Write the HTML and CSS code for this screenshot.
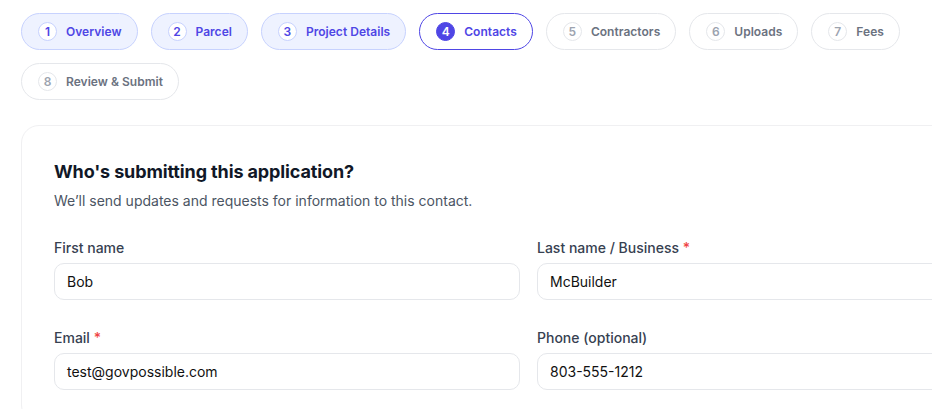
FILE: index.html
```html
<!DOCTYPE html>
<html lang="en">
<head>
<meta charset="utf-8">
<title>Contacts</title>
<link rel="stylesheet" href="styles.css">
</head>
<body>
<div class="page">
  <nav class="steps">
    <div class="step done"><span class="num">1</span><span class="label">Overview</span></div>
    <div class="step done"><span class="num">2</span><span class="label">Parcel</span></div>
    <div class="step done"><span class="num">3</span><span class="label">Project Details</span></div>
    <div class="step active"><span class="num">4</span><span class="label">Contacts</span></div>
    <div class="step"><span class="num">5</span><span class="label">Contractors</span></div>
    <div class="step"><span class="num">6</span><span class="label">Uploads</span></div>
    <div class="step"><span class="num">7</span><span class="label">Fees</span></div>
    <div class="step"><span class="num">8</span><span class="label">Review &amp; Submit</span></div>
  </nav>

  <section class="card">
    <h2 class="title">Who's submitting this application?</h2>
    <p class="subtitle">We’ll send updates and requests for information to this contact.</p>
    <div class="form">
      <div class="field">
        <label class="flabel">First name</label>
        <div class="input">Bob</div>
      </div>
      <div class="field">
        <label class="flabel">Last name / Business <span class="req">*</span></label>
        <div class="input">McBuilder</div>
      </div>
      <div class="field">
        <label class="flabel">Email <span class="req">*</span></label>
        <div class="input">test@govpossible.com</div>
      </div>
      <div class="field">
        <label class="flabel">Phone (optional)</label>
        <div class="input">803-555-1212</div>
      </div>
    </div>
  </section>
</div>
</body>
</html>
```

FILE: styles.css
```css
html, body {
  margin: 0;
  padding: 0;
  overflow: hidden;
  background: #ffffff;
}
body {
  font-family: Inter, "Noto Sans", sans-serif;
  color: #111827;
}
.page {
  padding: 13px 0 0 21px;
}
.steps {
  display: flex;
  flex-wrap: wrap;
  gap: 13px;
  width: 900px;
}
.step {
  display: flex;
  align-items: center;
  gap: 9px;
  height: 37px;
  box-sizing: border-box;
  padding: 0 15px 0 16px;
  border: 1px solid #e5e7eb;
  border-radius: 999px;
  background: #ffffff;
  color: #6b7280;
  font-size: 12px;
  font-weight: 600;
  letter-spacing: 0.03px;
}
.num {
  display: flex;
  align-items: center;
  justify-content: center;
  width: 19px;
  height: 19px;
  box-sizing: border-box;
  border-radius: 50%;
  border: 1px solid #e5e7eb;
  background: #ffffff;
  color: #9ca3af;
  font-size: 12px;
  font-weight: 600;
}
.step.done {
  background: #eef2ff;
  border-color: #c7d2fe;
  color: #4f46e5;
}
.step.done .num {
  border-color: #c7d2fe;
  color: #4f46e5;
}
.step.active {
  border-color: #4f46e5;
  color: #4f46e5;
}
.step.active .num {
  background: #4f46e5;
  border-color: #4f46e5;
  color: #ffffff;
}
.card {
  margin-top: 25px;
  width: max-content;
  padding: 34px 32px 32px;
  border: 1px solid #f0f0f2;
  border-radius: 18px;
  background: #ffffff;
}
.title {
  margin: 0;
  font-size: 18px;
  line-height: 24px;
  font-weight: 700;
  letter-spacing: -0.12px;
  color: #111827;
}
.subtitle {
  margin: 7px 0 0;
  font-size: 14px;
  line-height: 20px;
  color: #4b5563;
}
.form {
  display: grid;
  grid-template-columns: 466px 466px;
  column-gap: 17px;
  row-gap: 28px;
  margin-top: 27px;
}
.field {
  display: flex;
  flex-direction: column;
}
.flabel {
  font-size: 14px;
  line-height: 20px;
  font-weight: 500;
  color: #374151;
  margin-bottom: 5px;
}
.req {
  color: #ef4444;
}
.input {
  height: 37px;
  box-sizing: border-box;
  padding: 0 12px;
  display: flex;
  align-items: center;
  border: 1px solid #e5e7eb;
  border-radius: 10px;
  font-size: 14px;
  color: #111111;
}
```
